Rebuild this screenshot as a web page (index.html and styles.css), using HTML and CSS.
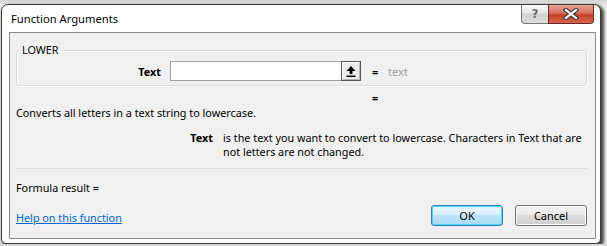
FILE: index.html
```html
<!DOCTYPE html>
<html lang="en">
<head>
    <meta charset="UTF-8">
    <title>Function Arguments</title>
    <link rel="stylesheet" href="styles.css">
</head>
<body>
    <div class="window">
        <div class="titlebar">
            <span class="title">Function Arguments</span>
            <div class="caption-buttons">
                <button class="cap-help">?</button>
                <button class="cap-close">
                    <svg width="18" height="12" viewBox="0 0 18 12">
                        <path d="M4 2 L14 10 M14 2 L4 10" stroke="#3b3b3b" stroke-width="4.5" stroke-linecap="square"/>
                        <path d="M4 2 L14 10 M14 2 L4 10" stroke="#ffffff" stroke-width="2.2" stroke-linecap="square"/>
                    </svg>
                </button>
            </div>
        </div>
        <div class="panel">
            <fieldset class="group">
                <legend>LOWER</legend>
                <div class="arg-row">
                    <label class="arg-label" for="arg-text">Text</label>
                    <div class="arg-input">
                        <input id="arg-text" type="text">
                        <button class="collapse-btn">
                            <svg width="12" height="13" viewBox="0 0 12 13">
                                <path d="M6 1 L10.5 6 L7.4 6 L7.4 9 L4.6 9 L4.6 6 L1.5 6 Z" fill="#000"/>
                                <rect x="1.5" y="10.5" width="9" height="1.5" fill="#000"/>
                            </svg>
                        </button>
                    </div>
                    <span class="eq">=</span>
                    <span class="arg-value">text</span>
                </div>
            </fieldset>
            <div class="result-eq">=</div>
            <p class="summary">Converts all letters in a text string to lowercase.</p>
            <div class="arg-help">
                <span class="arg-help-name">Text</span>
                <span class="arg-help-text">is the text you want to convert to lowercase. Characters in Text that are not letters are not changed.</span>
            </div>
            <hr class="sep">
            <p class="formula">Formula result =</p>
            <div class="footer">
                <a href="#" class="help-link">Help on this function</a>
                <div class="actions">
                    <button class="btn btn-default">OK</button>
                    <button class="btn">Cancel</button>
                </div>
            </div>
        </div>
    </div>
</body>
</html>
```

FILE: styles.css
```css
body {
    margin: 0;
    padding: 4px 0 0 1px;
    background: linear-gradient(#d4d4d4, #ececec 6px);
    font-family: "Segoe UI", "Noto Sans", "Liberation Sans", sans-serif;
    font-size: 10.8px;
    color: #000;
}
.window {
    box-sizing: border-box;
    width: 600px;
    height: 240px;
    background: #fff;
    border: 1px solid #3a3a3a;
    border-radius: 7px 7px 5px 5px;
    box-shadow: 2px 2px 3px 1px rgba(0, 0, 0, 0.7);
    padding: 0 4px 0 7px;
    display: flex;
    flex-direction: column;
}
.titlebar {
    height: 27px;
    flex-shrink: 0;
    display: flex;
    justify-content: space-between;
    align-items: flex-start;
}
.title {
    font-size: 11.2px;
    margin-top: 6px;
    margin-left: 2px;
}
.caption-buttons {
    display: flex;
    margin-right: 2px;
}
.caption-buttons button {
    height: 19px;
    padding: 0;
    margin: 0;
    border: 1px solid #7b7b7b;
    border-top: none;
    display: flex;
    align-items: center;
    justify-content: center;
}
.cap-help {
    width: 27px;
    border-radius: 0 0 0 4px;
    background: linear-gradient(#fbfbfb, #e6e6e6 45%, #d2d2d2 50%, #dcdcdc);
    color: #6a6a6a;
    font-family: "DejaVu Sans", sans-serif;
    font-size: 12px;
    font-weight: bold;
}
.caption-buttons .cap-help {
    border-right: none;
}
.cap-close {
    width: 46px;
    border-radius: 0 0 4px 0;
    background: linear-gradient(#eba699, #d86f5c 45%, #c3412a 55%, #d7664f);
}
.caption-buttons .cap-close {
    border-color: #6b2a20;
}
.panel {
    flex: 1;
    margin-bottom: 4px;
    border: 1px solid #8c8c8c;
    background: #f0f0f0;
    padding: 0 8px 0 6px;
    display: flex;
    flex-direction: column;
}
.group {
    margin: 10px 0 0 0;
    padding: 4px 0 4px 0;
    border: 1px solid #d8dde2;
    border-radius: 3px;
    box-shadow: inset 1px 1px 0 #fff, 1px 1px 0 #fff;
    min-width: 0;
}
.group legend {
    padding: 0 1px;
    margin-left: 4px;
    line-height: 14px;
    height: 14px;
}
.arg-row {
    display: flex;
    align-items: center;
}
.arg-label {
    width: 144px;
    text-align: right;
    font-weight: bold;
    margin-right: 9px;
}
.arg-input {
    display: flex;
    height: 20px;
    border: 1px solid #a0a0a0;
    background: #fff;
    box-sizing: border-box;
}
.arg-input input {
    width: 170px;
    border: none;
    padding: 0;
    margin: 0;
    outline: none;
}
.collapse-btn {
    width: 20px;
    height: 20px;
    margin: -1px -1px -1px 0;
    padding: 0;
    border: 1px solid #555;
    box-shadow: inset 1px 1px 0 #fff, inset -1px -1px 0 #b8b8b8;
    background: #ececec;
    display: flex;
    align-items: center;
    justify-content: center;
}
.eq {
    font-weight: bold;
    margin-left: 11px;
    width: 6px;
}
.arg-value {
    color: #a0a0a0;
    font-size: 11px;
    margin-left: 10px;
}
.result-eq {
    font-weight: bold;
    height: 14px;
    line-height: 14px;
    margin-top: 5px;
    padding-left: 356px;
}
.summary {
    margin: 1px 0 0 0;
    line-height: 14px;
}
.arg-help {
    display: flex;
    margin-top: 11px;
    line-height: 14px;
}
.arg-help-name {
    width: 197px;
    text-align: right;
    font-weight: bold;
    margin-right: 10px;
    flex-shrink: 0;
}
.arg-help-text {
    width: 368px;
}
.sep {
    margin: 9px 0 0 0;
    border: none;
    border-top: 1px solid #d5dfe7;
    height: 0;
}
.formula {
    margin: 12px 0 0 0;
    line-height: 14px;
}
.footer {
    display: flex;
    justify-content: space-between;
    align-items: center;
    margin-top: 10px;
}
.help-link {
    color: #0066cc;
    text-decoration: underline;
    margin-top: 3px;
}
.actions {
    display: flex;
    gap: 12px;
}
.btn {
    width: 72px;
    height: 21px;
    font-family: inherit;
    font-size: 11px;
    border: 1px solid #707070;
    border-radius: 3px;
    background: linear-gradient(#f2f2f2, #ebebeb 45%, #dddddd 50%, #cfcfcf);
    box-shadow: inset 0 0 0 1px #fcfcfc;
    padding: 0;
}
.btn-default {
    border-color: #3c7fb1;
    box-shadow: inset 0 0 0 1px #48d8fb;
    background: linear-gradient(#eaf6fd, #d9f0fc 45%, #bee6fd 50%, #a7d9f5);
}
```
